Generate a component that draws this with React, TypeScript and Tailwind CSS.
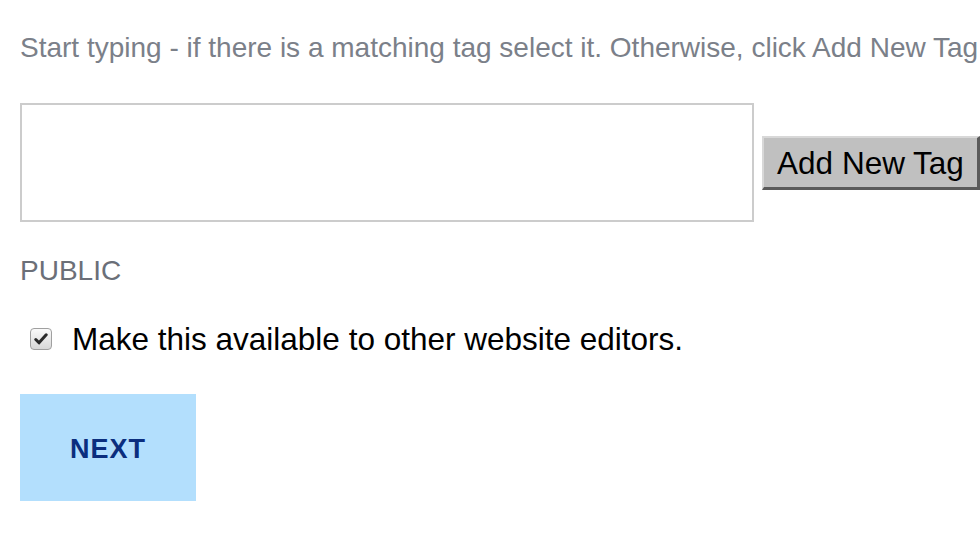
import React from "react";

export default function App() {
  return (
    <div className="w-[980px] h-[552px] bg-white overflow-hidden" style={{ fontFamily: '"Liberation Sans", Arial, sans-serif' }}>
      <div className="pl-[20px] pt-[30px]">
        <p className="text-[28px] leading-[36px] text-[#7b8089] whitespace-nowrap">
          Start typing - if there is a matching tag select it. Otherwise, click Add New Tag
        </p>
        <div className="flex items-center mt-[37px]">
          <div className="w-[734px] h-[119px] border-2 border-[#cccccc] bg-white shrink-0" />
          <button className="ml-[8px] h-[54px] w-[218px] shrink-0 bg-[#c0c0c0] border-t-2 border-l-2 border-t-[#d8d8d8] border-l-[#d8d8d8] border-b-[3px] border-r-[3px] border-b-[#5a5a5a] border-r-[#5a5a5a] text-black text-[31.5px] leading-none whitespace-nowrap flex items-center justify-center pt-[3px]">
            Add New Tag
          </button>
        </div>
        <div className="mt-[31px] text-[28px] leading-[36px] text-[#6b6f78]">PUBLIC</div>
        <div className="flex items-center mt-[32px]">
          <span className="ml-[10px] w-[22px] h-[22px] rounded-[4px] border border-[#a0a0a0] bg-gradient-to-b from-[#fafafa] to-[#d8d8d8] flex items-center justify-center shrink-0">
            <svg width="14" height="12" viewBox="0 0 14 12">
              <path d="M1.8 6.5 L5 9.8 L12.2 1.8" fill="none" stroke="#2a2a2a" strokeWidth="3" strokeLinecap="round" strokeLinejoin="round" />
            </svg>
          </span>
          <span className="ml-[20px] text-[31.5px] leading-[36px] text-black whitespace-nowrap">Make this available to other website editors.</span>
        </div>
        <button className="mt-[37px] w-[176px] h-[107px] bg-[#b3dffd] text-[#0b2e7e] text-[27px] font-bold tracking-[1px] flex items-center justify-center pt-[4px]">
          NEXT
        </button>
      </div>
    </div>
  );
}
